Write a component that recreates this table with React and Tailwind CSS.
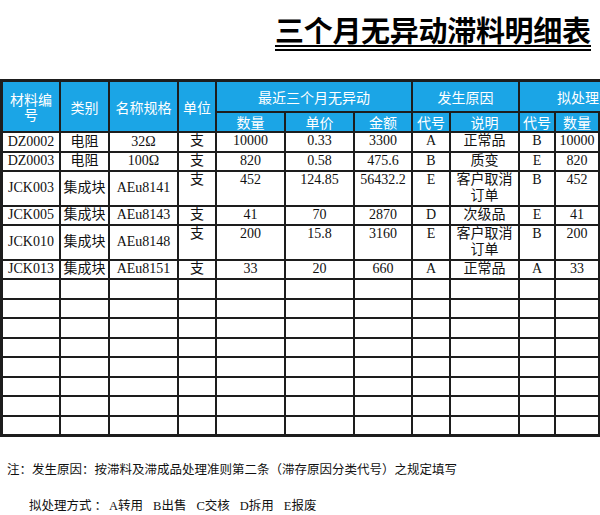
import React from 'react';

const HEAD = 'bg-[#1ba5e6] text-white flex items-center justify-center text-center text-[14px] leading-[16px]';
const CELL = 'bg-white text-[#111] flex justify-center text-center text-[14px] leading-[16px]';

const rows = [
  ['DZ0002', '电阻', '32Ω', '支', '10000', '0.33', '3300', 'A', '正常品', 'B', '10000'],
  ['DZ0003', '电阻', '100Ω', '支', '820', '0.58', '475.6', 'B', '质变', 'E', '820'],
  ['JCK003', '集成块', 'AEu8141', '支', '452', '124.85', '56432.2', 'E', '客户取消订单', 'B', '452'],
  ['JCK005', '集成块', 'AEu8143', '支', '41', '70', '2870', 'D', '次级品', 'E', '41'],
  ['JCK010', '集成块', 'AEu8148', '支', '200', '15.8', '3160', 'E', '客户取消订单', 'B', '200'],
  ['JCK013', '集成块', 'AEu8151', '支', '33', '20', '660', 'A', '正常品', 'A', '33'],
];

const subHeads = ['数量', '单价', '金额', '代号', '说明', '代号', '数量', ''];

export default function App() {
  const serif = { fontFamily: '"Liberation Serif", "Noto Sans CJK SC", serif' };
  return (
    <div className="w-[600px] h-[515px] overflow-hidden bg-white" style={{ fontFamily: '"Noto Sans CJK SC", sans-serif' }}>
      {/* title */}
      <div className="h-[79px] pl-[275px] pt-[13px]">
        <div className="inline-flex flex-col">
          <div className="text-[29px] leading-[32px] font-bold text-black whitespace-nowrap tracking-[-0.3px]">
            三个月无异动滞料明细表
          </div>
          <div className="h-[2px] bg-black" />
          <div className="h-[1.5px] bg-black mt-[2px]" />
        </div>
      </div>

      {/* table */}
      <div className="w-[660px] grid gap-[2px] bg-[#1d1d1d] border-l-[3px] border-t-[3px] border-b-[3px] border-[#1d1d1d] grid-cols-[56px_47px_67px_36px_67px_67px_56px_36px_67px_34px_42px_60px] grid-rows-[29px_18px_17.5px_17.5px_32.5px_17.5px_32.5px_17.5px_repeat(8,17.5px)]">
        <div className={`${HEAD} row-span-2 flex-col`}>
          <span className="block leading-[15px]">材料编</span>
          <span className="block leading-[15px]">号</span>
        </div>
        <div className={`${HEAD} row-span-2`}>类别</div>
        <div className={`${HEAD} row-span-2`}>名称规格</div>
        <div className={`${HEAD} row-span-2`}>单位</div>
        <div className={`${HEAD} col-span-3`}>最近三个月无异动</div>
        <div className={`${HEAD} col-span-2`}>发生原因</div>
        <div className={`${HEAD} col-span-3 !justify-start pl-[37px] whitespace-nowrap overflow-hidden`}>拟处理方式</div>
        {subHeads.map((h, i) => (
          <div key={i} className={HEAD}>{h}</div>
        ))}

        {rows.map((r, ri) =>
          [...r, ''].map((v, ci) => (
            <div
              key={`${ri}-${ci}`}
              className={`${CELL} ${ci < 3 ? 'items-center' : 'items-start'}`}
              style={serif}
            >
              {v}
            </div>
          ))
        )}

        {Array.from({ length: 8 }).map((_, ri) =>
          Array.from({ length: 12 }).map((_, ci) => (
            <div key={`e${ri}-${ci}`} className="bg-white" />
          ))
        )}
      </div>

      {/* notes */}
      <div className="mt-[24px] pl-[7px] text-[12.5px] leading-[16px] text-[#111] whitespace-nowrap">
        注：发生原因：按滞料及滞成品处理准则第二条（滞存原因分类代号）之规定填写
      </div>
      <div className="mt-[21px] pl-[29px] flex text-[12.5px] leading-[16px] text-[#111] whitespace-nowrap" style={serif}>
        <span>拟处理方式</span>
        <span className="ml-[3px]">：</span>
        <span className="ml-[2px]">A转用</span>
        <span className="ml-[10px]">B出售</span>
        <span className="ml-[10px]">C交核</span>
        <span className="ml-[10px]">D拆用</span>
        <span className="ml-[10px]">E报废</span>
      </div>
    </div>
  );
}
